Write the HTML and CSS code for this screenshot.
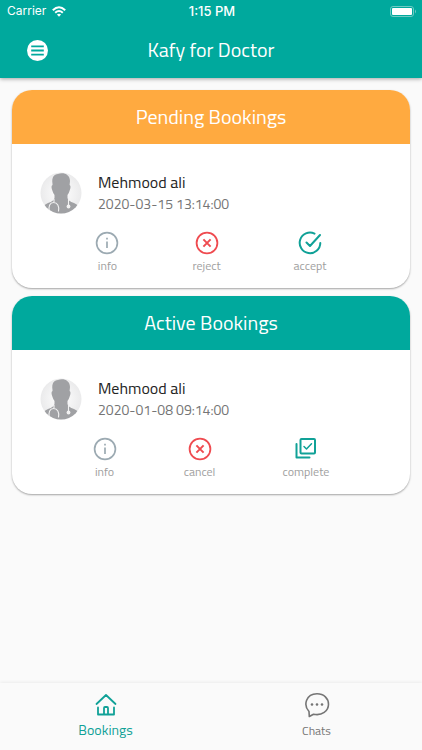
FILE: index.html
```html
<!DOCTYPE html>
<html lang="en">
<head>
<meta charset="utf-8">
<meta name="viewport" content="width=device-width, initial-scale=1">
<title>Kafy for Doctor</title>
<link rel="stylesheet" href="styles.css">
</head>
<body>
<svg class="defs" width="0" height="0" aria-hidden="true">
  <defs>
    <radialGradient id="avatar-bg"><stop offset="0" stop-color="#fff"/><stop offset="1" stop-color="#eaeaeb"/></radialGradient>
    <clipPath id="avatar-clip"><circle cx="21" cy="21" r="20.500"/></clipPath>
    <symbol id="avatar" viewBox="0 0 42 42">
      <g clip-path="url(#avatar-clip)">
        <rect width="42" height="42" fill="url(#avatar-bg)"/>
        <path fill="#a0a1a4" d="M12.500 12C11.500 5 14 2.500 18 2C23 0 30 2 30 9L29.600 13Q31.500 14 29.500 19Q29 21 27.500 23V26Q28 29 34 31Q40 33 41 42H1Q2 33 8 31Q14 29 14.500 26V23Q13 21 12.500 19Q10.500 14 12.500 13Z"/>
        <path fill="none" stroke="#f2f2f2" stroke-width="1.100" d="M14 27V30M9.500 39.500C8 34 10 30.500 13.500 30.500C17.500 30.500 19.500 34 18.500 39.500M28.500 26.500V33"/>
        <circle cx="28.500" cy="34.500" r="1.900" fill="#f2f2f2"/>
      </g>
    </symbol>
    <symbol id="info" viewBox="0 0 24 24">
      <circle cx="12" cy="12" r="10.400" fill="none" stroke="currentColor" stroke-width="1.700"/>
      <path fill="none" stroke="currentColor" stroke-width="1.700" d="M12 10.500V17M12 6.700V8.500"/>
    </symbol>
    <symbol id="cross" viewBox="0 0 24 24">
      <circle cx="12" cy="12" r="10.400" fill="none" stroke="currentColor" stroke-width="1.800"/>
      <path fill="none" stroke="currentColor" stroke-width="2" d="M8.400 8.400L15.600 15.600M15.600 8.400L8.400 15.600"/>
    </symbol>
    <symbol id="accept" viewBox="0 0 24 24">
      <path fill="none" stroke="currentColor" stroke-width="2" stroke-linecap="round" stroke-linejoin="round" d="M16.500 2.600A10.300 10.300 0 1 0 22.300 12M8.500 11.500L12 15L22 4"/>
    </symbol>
    <symbol id="complete" viewBox="0 0 24 24">
      <g fill="none" stroke="currentColor" stroke-width="2" stroke-linecap="round" stroke-linejoin="round">
        <rect x="6.500" y="2" width="14.500" height="14.500" rx="1"/>
        <path d="M2.500 7V20.500H15.500"/><path stroke-width="1.500" d="M10 9.500L12.500 12L17.500 6.800"/>
      </g>
    </symbol>
  </defs>
</svg>
<div class="app">
  <header class="top">
    <div class="status">
      <span class="carrier">Carrier
        <svg width="14" height="11" viewBox="0 0 14 11" aria-hidden="true"><g fill="none" stroke="#fff" stroke-width="2"><path d="M.8 4.200Q7-1.800 13.200 4.200M3.200 6.800Q7 3.200 10.800 6.800"/></g><path fill="#fff" d="M4.900 8.500Q7 6.800 9.100 8.500L7 10.800Z"/></svg>
      </span>
      <span class="clock">1:15 PM</span>
      <svg class="battery" width="27" height="11" viewBox="0 0 27 11" aria-hidden="true"><rect x=".5" y=".5" width="23" height="10" rx="2.500" fill="none" stroke="#6fcac3"/><rect x="2" y="2" width="20" height="7" rx="1" fill="#fff"/><path fill="#6fcac3" d="M25 3.500Q27 5.500 25 7.500Z"/></svg>
    </div>
    <div class="bar">
      <button class="menu" type="button" aria-label="Menu">
        <svg width="21" height="21" viewBox="0 0 20 20"><circle cx="10" cy="10" r="10" fill="#fff"/><path stroke="#00a99d" stroke-width="1.700" d="M4 6H16M4 10H16M4 14H16"/></svg>
      </button>
      <h1>Kafy for Doctor</h1>
    </div>
  </header>
  <main>
    <section class="card">
      <h2 class="pending">Pending Bookings</h2>
      <div class="person">
        <svg class="photo" aria-hidden="true"><use href="#avatar"/></svg>
        <div><h3>Mehmood ali</h3><p>2020-03-15 13:14:00</p></div>
      </div>
      <div class="actions">
        <button class="grey" type="button"><svg><use href="#info"/></svg><span>info</span></button>
        <button class="red" type="button"><svg><use href="#cross"/></svg><span>reject</span></button>
        <button class="teal" type="button"><svg><use href="#accept"/></svg><span>accept</span></button>
      </div>
    </section>
    <section class="card">
      <h2 class="active">Active Bookings</h2>
      <div class="person">
        <svg class="photo" aria-hidden="true"><use href="#avatar"/></svg>
        <div><h3>Mehmood ali</h3><p>2020-01-08 09:14:00</p></div>
      </div>
      <div class="actions">
        <button class="grey" type="button"><svg><use href="#info"/></svg><span>info</span></button>
        <button class="red" type="button"><svg><use href="#cross"/></svg><span>cancel</span></button>
        <button class="teal" type="button"><svg><use href="#complete"/></svg><span>complete</span></button>
      </div>
    </section>
  </main>
  <nav class="tabs">
    <a class="current" href="#bookings" aria-current="page">
      <svg viewBox="0 0 26 26"><g fill="none" stroke="currentColor" stroke-width="1.800" stroke-linecap="round" stroke-linejoin="round"><path d="M3.500 12L13 3L22.500 12M5 15.500V22.500H11V16Q11 15 12 15H14Q15 15 15 16V22.500H21V15.500M11 22.500H15"/></g></svg>
      <span>Bookings</span>
    </a>
    <a href="#chats">
      <svg viewBox="0 0 26 26"><path fill="none" stroke="currentColor" stroke-width="1.600" stroke-linejoin="round" d="M5.300 24.500L5 19.500C-1 13 2 2 13 1.800C20 1.800 24.500 6.500 24.500 12.300C24.500 19 18 24 9.500 22.200Z"/><g fill="currentColor"><circle cx="8" cy="12.500" r="1.300"/><circle cx="13" cy="12.500" r="1.300"/><circle cx="18" cy="12.500" r="1.300"/></g></svg>
      <span>Chats</span>
    </a>
  </nav>
</div>
</body>
</html>
```
FILE: styles.css
```css
* { box-sizing: border-box; }

body {
  margin: 0;
  background: #fafafa;
  color: #242424;
  font-family: "Titillium Web", Roboto, "Noto Sans", sans-serif;
}

h1, h2, h3, p { margin: 0; font-weight: 400; }
svg { display: block; }
.defs { position: absolute; }

.app {
  display: flex;
  flex-direction: column;
  min-height: 100vh;
}

.top {
  background: #00a99d;
  color: #fff;
  box-shadow: 0 1px 4px rgba(0, 0, 0, .35);
}

.status {
  display: grid;
  grid-template-columns: 1fr auto 1fr;
  align-items: center;
  height: 22px;
  padding: 0 5px 0 7px;
  font: 12px/22px Inter, sans-serif;
}

.carrier { display: flex; align-items: center; gap: 6px; }
.clock { font-size: 13px; font-weight: 500; }
.battery { justify-self: end; }

.bar {
  display: grid;
  grid-template-columns: 56px 1fr 56px;
  align-items: center;
  height: 56px;
}

.bar h1 { font-size: 20px; line-height: 28px; text-align: center; }

button {
  padding: 0;
  border: 0;
  background: none;
  font: inherit;
  cursor: pointer;
}

.menu { justify-self: end; padding: 8px; }

main {
  flex: 1;
  display: flex;
  flex-direction: column;
  gap: 8px;
  padding: 12px;
}

.card {
  overflow: hidden;
  padding-bottom: 15px;
  border-radius: 20px;
  background: #fff;
  box-shadow: 0 1px 2px rgba(0, 0, 0, .35);
}

.card h2 {
  color: #fff;
  font-size: 20px;
  line-height: 54px;
  text-align: center;
}

.pending { background: #ffaa40; }
.active { background: #00a99d; }

.person {
  display: flex;
  align-items: center;
  gap: 16px;
  padding: 27px 28px 16px;
}

.photo { width: 42px; height: 42px; }
.person h3 { font-size: 16px; line-height: 22px; }
.person p { color: #757575; font-size: 14px; line-height: 22px; }

.actions {
  display: flex;
  justify-content: space-around;
  padding: 0 47px;
}

.actions button {
  display: flex;
  flex-direction: column;
  align-items: center;
  gap: 4px;
}

.actions svg { width: 24px; height: 24px; }
.actions span { color: #9e9e9e; font-size: 12px; line-height: 14px; }
.grey { color: #9caab2; }
.red { color: #ef4b50; }
.teal { color: #10a197; }

.tabs {
  display: flex;
  height: 67px;
  background: #fafafa;
  box-shadow: 0 -1px 3px rgba(0, 0, 0, .06);
}

.tabs a {
  flex: 1;
  display: flex;
  flex-direction: column;
  align-items: center;
  gap: 4px;
  padding-top: 9px;
  color: #757575;
  font-size: 12px;
  line-height: 18px;
  text-decoration: none;
}

.tabs svg { width: 26px; height: 26px; }
.tabs .current { color: #10a197; font-size: 14px; line-height: 16px; }
```
